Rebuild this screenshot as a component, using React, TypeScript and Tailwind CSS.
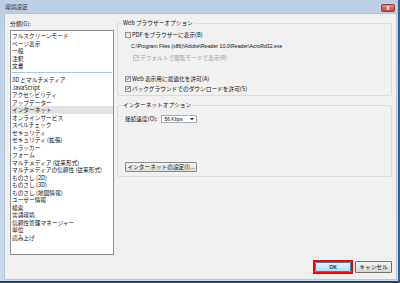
import React from "react";

function Box({ checked, disabled }: { checked?: boolean; disabled?: boolean }) {
  return (
    <span
      className={
        disabled
          ? "w-[6px] h-[6px] shrink-0 border border-[#c4c4c4] bg-[#f4f4f4] flex items-center justify-center"
          : "w-[6px] h-[6px] shrink-0 border border-[#8e8f8f] bg-gradient-to-br from-[#dcdcdc] to-white flex items-center justify-center"
      }
    >
      {checked && (
        <svg width="5" height="5" viewBox="0 0 5 5">
          <path
            d="M0.6 2.5 L1.9 3.8 L4.4 0.9"
            stroke={disabled ? "#a0a0a0" : "#2c3f6a"}
            strokeWidth="1"
            fill="none"
          />
        </svg>
      )}
    </span>
  );
}

const group1 = ["フルスクリーンモード", "ページ表示", "一般", "注釈", "文書"];
const group2 = [
  "3D とマルチメディア",
  "JavaScript",
  "アクセシビリティ",
  "アップデーター",
  "インターネット",
  "オンラインサービス",
  "スペルチェック",
  "セキュリティ",
  "セキュリティ (拡張)",
  "トラッカー",
  "フォーム",
  "マルチメディア (従来形式)",
  "マルチメディアの信頼性 (従来形式)",
  "ものさし (2D)",
  "ものさし (3D)",
  "ものさし (地図情報)",
  "ユーザー情報",
  "検索",
  "言語環境",
  "信頼性管理マネージャー",
  "単位",
  "読み上げ",
];

export default function App() {
  return (
    <div className="w-[400px] h-[283px] flex flex-col bg-gradient-to-b from-[#bccfe4] to-[#c9d9ea] border-r-[2px] border-b-[2px] border-r-[#33628c] border-b-[#1d4a58] font-['Noto_Sans_CJK_JP','Liberation_Sans',sans-serif] text-[5.7px] text-[#111]">
      {/* title bar */}
      <div className="h-[13px] flex justify-between pl-[5px] pr-[3px] shrink-0">
        <span className="leading-[6px] mt-[4px] text-[#2a2a2a]">環境設定</span>
        <span className="mt-[4px] w-[14px] h-[8px] rounded-[2px] border border-[#8d3a33] bg-gradient-to-b from-[#e08a7f] to-[#c4453a] flex items-center justify-center text-white text-[6px] leading-[6px] font-bold">
          x
        </span>
      </div>

      {/* client */}
      <div className="flex-1 flex flex-col bg-[#f0f0f0] ml-[4px] mr-[1px] mb-[1px] border border-[#b5c5d8] pt-[6px] pl-[5px] pr-[4px] pb-[4px]">
        <div className="flex gap-[3px]">
          {/* left column */}
          <div className="w-[104px] flex flex-col shrink-0">
            <div className="h-[8px] leading-[8px]">分類(G):</div>
            <div className="mt-[2px] h-[225px] bg-white border border-[#8a9099] pt-[1px] flex flex-col">
              {group1.map((t) => (
                <div key={t} className="h-[7.5px] leading-[7.5px] pl-[1px] whitespace-nowrap">
                  {t}
                </div>
              ))}
              <div className="h-[6.5px] flex items-center px-[1px]">
                <div className="w-full h-px bg-[#a8c8e8]" />
              </div>
              {group2.map((t) => (
                <div
                  key={t}
                  className={
                    t === "インターネット"
                      ? "h-[7.5px] leading-[7.5px] pl-[1px] whitespace-nowrap bg-[#e2e2e2]"
                      : "h-[7.5px] leading-[7.5px] pl-[1px] whitespace-nowrap"
                  }
                >
                  {t === "アップデーター" ? (
                    <span className="border-b border-[#a8c8e8]">{t}</span>
                  ) : (
                    t
                  )}
                </div>
              ))}
            </div>
          </div>

          {/* right column */}
          <div className="flex-1 flex flex-col">
            <div className="relative mt-[3px] border border-[#d5dce3] rounded-[2px] pl-[7px] pt-[7px] pb-[3px] flex flex-col">
              <span className="absolute top-[-4px] left-[4px] px-[1px] bg-[#f0f0f0] leading-[6px]">
                Web ブラウザーオプション
              </span>
              <div className="h-[7px] flex items-center gap-[1px]">
                <Box />
                <span className="leading-[7px]">PDF をブラウザーに表示(B)</span>
              </div>
              <div className="h-[7px] mt-[5px] pl-[6px] leading-[7px] whitespace-nowrap font-['Liberation_Sans',sans-serif] text-[5.2px]">
                C:\Program Files (x86)\Adobe\Reader 10.0\Reader\AcroRd32.exe
              </div>
              <div className="h-[7px] mt-[4px] pl-[8px] flex items-center gap-[1px] text-[#9a9a9a]">
                <Box checked disabled />
                <span className="leading-[7px]">デフォルトで閲覧モードで表示(R)</span>
              </div>
              <div className="h-[7px] mt-[14px] flex items-center gap-[1px]">
                <Box checked />
                <span className="leading-[7px]">Web 表示用に最適化を許可(A)</span>
              </div>
              <div className="h-[7px] mt-[3px] flex items-center gap-[1px]">
                <Box checked />
                <span className="leading-[7px]">バックグラウンドでのダウンロードを許可(S)</span>
              </div>
            </div>

            <div className="relative mt-[9px] border border-[#d5dce3] rounded-[2px] pl-[7px] pt-[9px] pb-[4px] flex flex-col">
              <span className="absolute top-[-4px] left-[4px] px-[1px] bg-[#f0f0f0] leading-[6px]">
                インターネットオプション
              </span>
              <div className="h-[8px] flex items-center gap-[4px]">
                <span className="leading-[8px]">接続速度(O):</span>
                <div className="w-[36px] h-[8px] bg-white border border-[#a5acb5] flex items-center justify-between pl-[2px] pr-[2px]">
                  <span className="leading-[6px] font-['Liberation_Sans',sans-serif] text-[5px]">56 Kbps</span>
                  <svg width="4" height="3" viewBox="0 0 4 3">
                    <path d="M0 0 L4 0 L2 2.5 Z" fill="#222" />
                  </svg>
                </div>
              </div>
              <div className="mt-[39px] w-[72px] h-[10px] border border-[#8a8a8a] rounded-[1px] bg-gradient-to-b from-[#f4f4f4] to-[#dcdcdc] flex items-center justify-center leading-[8px]">
                インターネットの設定(I)...
              </div>
            </div>
          </div>
        </div>

        {/* bottom buttons */}
        <div className="mt-auto flex justify-end items-center gap-[2px] mb-[1px]">
          <div className="w-[40px] h-[14px] border-[2px] border-[#ff0000] flex">
            <div className="flex-1 border border-[#3c7fb1] rounded-[1px] bg-gradient-to-b from-[#eaf6fd] to-[#a9dbf6] flex items-center justify-center leading-[8px] font-['Liberation_Sans',sans-serif] font-bold text-[5px] text-[#1c2a3a]">
              OK
            </div>
          </div>
          <div className="w-[37px] h-[12px] border border-[#707070] rounded-[1px] bg-gradient-to-b from-[#f3f3f3] to-[#d8d8d8] flex items-center justify-center leading-[8px]">
            キャンセル
          </div>
        </div>
      </div>
    </div>
  );
}
